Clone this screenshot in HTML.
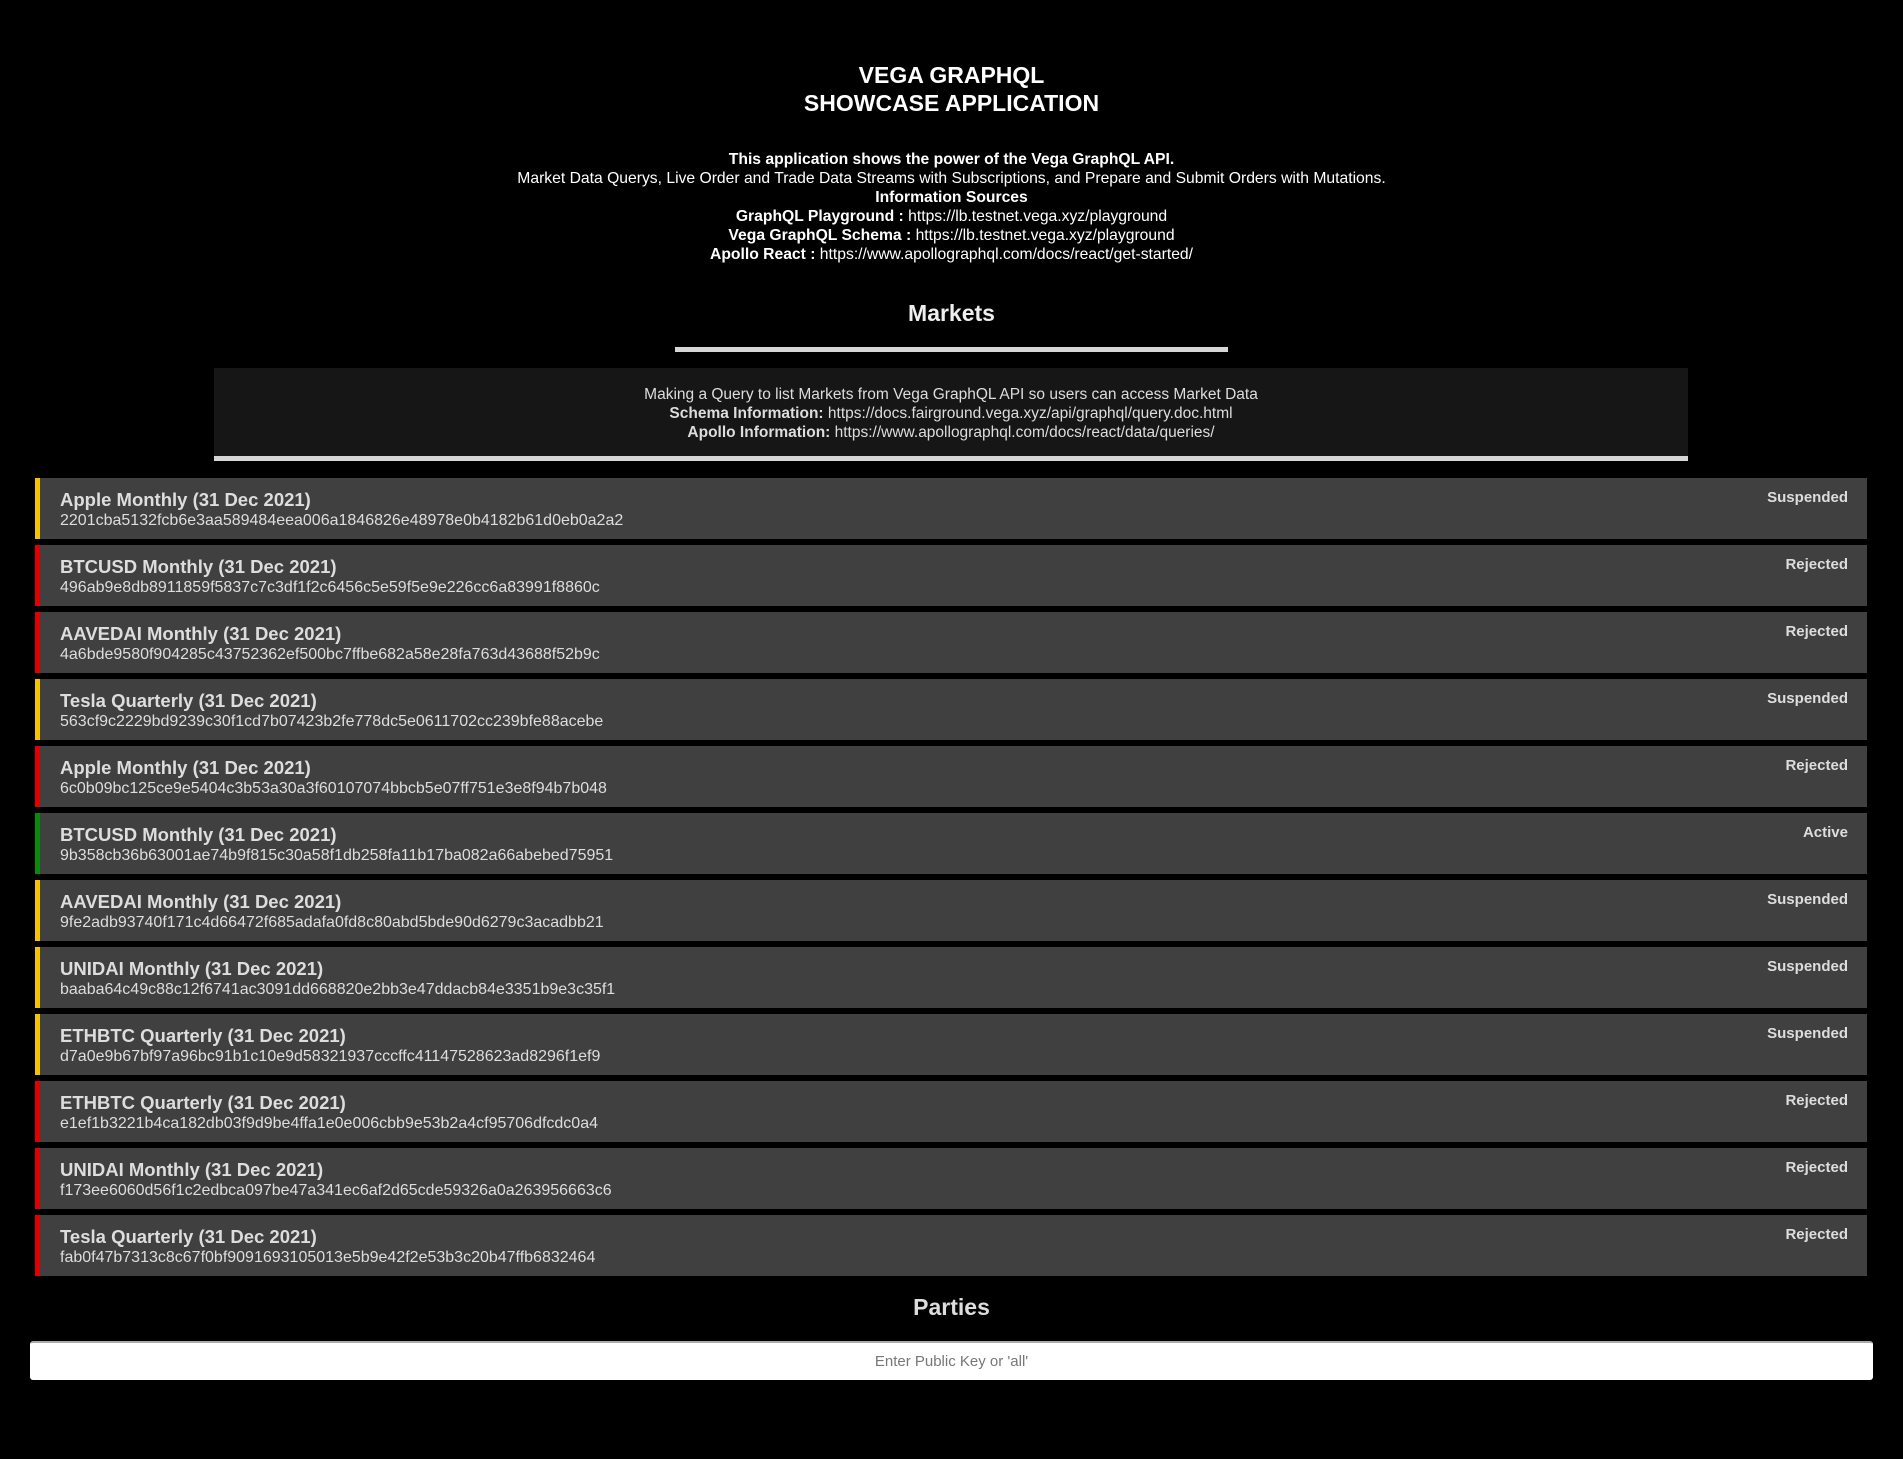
<!DOCTYPE html>
<html><head><meta charset="utf-8"><style>
*{box-sizing:border-box;margin:0;padding:0}
body{width:1903px;height:1459px;background:#000;color:#fff;font-family:"Liberation Sans",sans-serif;position:relative;overflow:hidden}
.c{position:absolute;left:0;width:1903px;text-align:center}
h1{font-size:23px;font-weight:bold;line-height:28px}
.intro{font-size:15.7px;line-height:19px}
.bar{position:absolute;left:675px;width:553px;top:347px;height:5px;background:#d6d6d6}
.box{position:absolute;left:214px;width:1474px;top:368px;height:93px;background:#161616;border-bottom:5px solid #d6d6d6;color:#ddd;font-size:15.5px;line-height:19px;text-align:center;padding-top:17px}
.row{position:absolute;left:35px;width:1832px;height:61px;background:#404040;border-left:5px solid;color:#ddd}
.row .t{position:absolute;left:20px;top:11px;font-size:18.5px;font-weight:bold}
.row .h{position:absolute;left:20px;top:34px;font-size:16px}
.row .s{position:absolute;right:19px;top:11px;font-size:15px;font-weight:bold}
.Y{border-color:#f5c400}.R{border-color:#e00000}.G{border-color:#0a8a0a}
.inp{position:absolute;left:30px;width:1843px;top:1341px;height:39px;background:#fff;border-top:2px solid #aaa;border-radius:3px;color:#777;font-size:15px;text-align:center;line-height:37px}
</style></head><body>
<div class="c" style="top:61px"><h1>VEGA GRAPHQL<br>SHOWCASE APPLICATION</h1></div>
<div class="c intro" style="top:150px"><b>This application shows the power of the Vega GraphQL API.</b><br>Market Data Querys, Live Order and Trade Data Streams with Subscriptions, and Prepare and Submit Orders with Mutations.<br><b>Information Sources</b><br><b>GraphQL Playground :</b> https://lb.testnet.vega.xyz/playground<br><b>Vega GraphQL Schema :</b> https://lb.testnet.vega.xyz/playground<br><b>Apollo React :</b> https://www.apollographql.com/docs/react/get-started/</div>
<div class="c" style="top:300px;font-size:23px;font-weight:bold;color:#eee">Markets</div>
<div class="bar"></div>
<div class="box">Making a Query to list Markets from Vega GraphQL API so users can access Market Data<br><b>Schema Information:</b> https://docs.fairground.vega.xyz/api/graphql/query.doc.html<br><b>Apollo Information:</b> https://www.apollographql.com/docs/react/data/queries/</div>
<div class="row Y" style="top:478px"><div class="t">Apple Monthly (31 Dec 2021)</div><div class="h">2201cba5132fcb6e3aa589484eea006a1846826e48978e0b4182b61d0eb0a2a2</div><div class="s">Suspended</div></div>
<div class="row R" style="top:545px"><div class="t">BTCUSD Monthly (31 Dec 2021)</div><div class="h">496ab9e8db8911859f5837c7c3df1f2c6456c5e59f5e9e226cc6a83991f8860c</div><div class="s">Rejected</div></div>
<div class="row R" style="top:612px"><div class="t">AAVEDAI Monthly (31 Dec 2021)</div><div class="h">4a6bde9580f904285c43752362ef500bc7ffbe682a58e28fa763d43688f52b9c</div><div class="s">Rejected</div></div>
<div class="row Y" style="top:679px"><div class="t">Tesla Quarterly (31 Dec 2021)</div><div class="h">563cf9c2229bd9239c30f1cd7b07423b2fe778dc5e0611702cc239bfe88acebe</div><div class="s">Suspended</div></div>
<div class="row R" style="top:746px"><div class="t">Apple Monthly (31 Dec 2021)</div><div class="h">6c0b09bc125ce9e5404c3b53a30a3f60107074bbcb5e07ff751e3e8f94b7b048</div><div class="s">Rejected</div></div>
<div class="row G" style="top:813px"><div class="t">BTCUSD Monthly (31 Dec 2021)</div><div class="h">9b358cb36b63001ae74b9f815c30a58f1db258fa11b17ba082a66abebed75951</div><div class="s">Active</div></div>
<div class="row Y" style="top:880px"><div class="t">AAVEDAI Monthly (31 Dec 2021)</div><div class="h">9fe2adb93740f171c4d66472f685adafa0fd8c80abd5bde90d6279c3acadbb21</div><div class="s">Suspended</div></div>
<div class="row Y" style="top:947px"><div class="t">UNIDAI Monthly (31 Dec 2021)</div><div class="h">baaba64c49c88c12f6741ac3091dd668820e2bb3e47ddacb84e3351b9e3c35f1</div><div class="s">Suspended</div></div>
<div class="row Y" style="top:1014px"><div class="t">ETHBTC Quarterly (31 Dec 2021)</div><div class="h">d7a0e9b67bf97a96bc91b1c10e9d58321937cccffc41147528623ad8296f1ef9</div><div class="s">Suspended</div></div>
<div class="row R" style="top:1081px"><div class="t">ETHBTC Quarterly (31 Dec 2021)</div><div class="h">e1ef1b3221b4ca182db03f9d9be4ffa1e0e006cbb9e53b2a4cf95706dfcdc0a4</div><div class="s">Rejected</div></div>
<div class="row R" style="top:1148px"><div class="t">UNIDAI Monthly (31 Dec 2021)</div><div class="h">f173ee6060d56f1c2edbca097be47a341ec6af2d65cde59326a0a263956663c6</div><div class="s">Rejected</div></div>
<div class="row R" style="top:1215px"><div class="t">Tesla Quarterly (31 Dec 2021)</div><div class="h">fab0f47b7313c8c67f0bf9091693105013e5b9e42f2e53b3c20b47ffb6832464</div><div class="s">Rejected</div></div>
<div class="c" style="top:1294px;font-size:23px;font-weight:bold;color:#ddd">Parties</div>
<div class="inp">Enter Public Key or 'all'</div>
</body></html>
